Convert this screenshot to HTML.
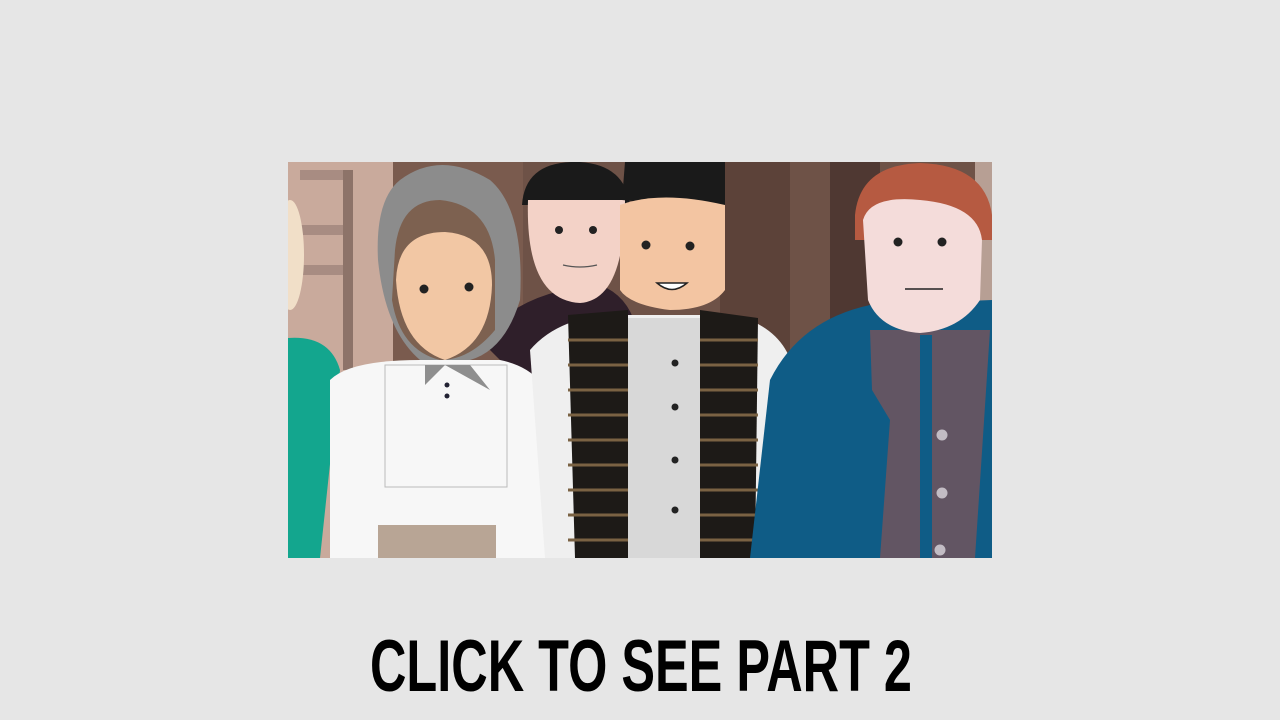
<!DOCTYPE html>
<html><head><meta charset="utf-8"><style>
html,body{margin:0;padding:0;background:#e6e6e6;width:1280px;height:720px;overflow:hidden}
</style></head><body>
<svg width="1280" height="720" viewBox="0 0 1280 720" xmlns="http://www.w3.org/2000/svg">
<rect width="1280" height="720" fill="#e6e6e6"/>
<clipPath id="c"><rect x="288" y="162" width="704" height="396"/></clipPath>
<g clip-path="url(#c)">
<rect x="288" y="162" width="704" height="396" fill="#6e5247"/>
<rect x="288" y="162" width="105" height="396" fill="#c9aa9c"/>
<rect x="300" y="170" width="50" height="10" fill="#a88c82"/>
<rect x="300" y="225" width="50" height="10" fill="#a88c82"/>
<rect x="300" y="265" width="50" height="10" fill="#a88c82"/>
<rect x="343" y="170" width="10" height="200" fill="#8d7369"/>
<rect x="393" y="162" width="130" height="396" fill="#7a5b4e"/>
<rect x="720" y="162" width="70" height="396" fill="#5c4239"/>
<rect x="830" y="162" width="50" height="396" fill="#4f3832"/>
<rect x="975" y="162" width="17" height="150" fill="#b79f94"/>
<ellipse cx="290" cy="255" rx="14" ry="55" fill="#f1dfc8"/>
<path d="M288 338 Q330 335 340 370 L320 558 L288 558Z" fill="#13a68e"/>
<path d="M480 340 Q520 290 600 285 Q640 300 640 360 L540 400Z" fill="#2f1f2a"/>
<path d="M522 205 Q525 160 580 162 Q625 165 630 205 Z" fill="#1a1a1a"/>
<path d="M528 200 Q525 300 580 303 Q625 300 625 200 Z" fill="#f3d2c7"/>
<circle cx="559" cy="230" r="4" fill="#222"/><circle cx="593" cy="230" r="4" fill="#222"/>
<path d="M563 265 Q580 269 597 265" stroke="#555" stroke-width="1.2" fill="none"/>
<path d="M400 180 Q440 150 490 180 Q525 210 520 300 Q505 350 470 360 L420 360 Q385 330 378 260 Q375 200 400 180Z" fill="#8c8c8c"/>
<path d="M395 250 Q400 200 440 200 Q490 205 495 260 L495 330 Q470 360 440 360 Q400 350 392 300Z" fill="#7d6150"/>
<path d="M396 280 Q398 232 445 232 Q492 235 492 285 Q490 345 445 360 Q400 345 396 280Z" fill="#f2c7a4"/>
<circle cx="424" cy="289" r="4.5" fill="#222"/><circle cx="469" cy="287" r="4.5" fill="#222"/>
<path d="M330 380 Q350 360 420 360 L500 360 Q550 370 555 420 L558 558 L330 558Z" fill="#f7f7f7"/>
<rect x="385" y="365" width="122" height="122" fill="none" stroke="#bbb" stroke-width="1"/>
<rect x="378" y="525" width="118" height="33" fill="#b8a595"/>
<path d="M425 385 L445 365 L490 390 L470 365 L425 365Z" fill="#8e8e8e"/>
<circle cx="447" cy="385" r="2.5" fill="#223"/><circle cx="447" cy="396" r="2.5" fill="#223"/>
<path d="M530 350 Q560 315 620 315 L735 315 Q790 330 795 380 L790 558 L545 558Z" fill="#efefef"/>
<rect x="625" y="318" width="105" height="240" fill="#d8d8d8"/>
<path d="M568 315 L628 310 L628 558 L575 558Z" fill="#1d1a17"/>
<path d="M700 310 L758 318 L755 558 L700 558Z" fill="#1d1a17"/>
<g stroke="#7a6243" stroke-width="3">
<line x1="568" y1="340" x2="628" y2="340"/><line x1="700" y1="340" x2="758" y2="340"/>
<line x1="568" y1="365" x2="628" y2="365"/><line x1="700" y1="365" x2="758" y2="365"/>
<line x1="568" y1="390" x2="628" y2="390"/><line x1="700" y1="390" x2="758" y2="390"/>
<line x1="568" y1="415" x2="628" y2="415"/><line x1="700" y1="415" x2="758" y2="415"/>
<line x1="568" y1="440" x2="628" y2="440"/><line x1="700" y1="440" x2="758" y2="440"/>
<line x1="568" y1="465" x2="628" y2="465"/><line x1="700" y1="465" x2="758" y2="465"/>
<line x1="568" y1="490" x2="628" y2="490"/><line x1="700" y1="490" x2="758" y2="490"/>
<line x1="568" y1="515" x2="628" y2="515"/><line x1="700" y1="515" x2="758" y2="515"/>
<line x1="568" y1="540" x2="628" y2="540"/><line x1="700" y1="540" x2="758" y2="540"/>
</g>
<g fill="#222"><circle cx="675" cy="363" r="3.5"/><circle cx="675" cy="407" r="3.5"/><circle cx="675" cy="460" r="3.5"/><circle cx="675" cy="510" r="3.5"/></g>
<path d="M622 200 L625 162 L725 162 L725 210Z" fill="#1a1a1a"/>
<path d="M620 205 Q660 190 725 205 L725 290 Q710 310 670 310 Q630 305 620 290Z" fill="#f3c5a2"/>
<circle cx="646" cy="245" r="4.5" fill="#222"/><circle cx="690" cy="246" r="4.5" fill="#222"/>
<path d="M657 283 Q672 296 687 283 Z" fill="#fff" stroke="#222" stroke-width="1.5"/>
<path d="M770 380 Q800 320 870 305 L992 300 L992 558 L750 558Z" fill="#0f5c86"/>
<path d="M870 330 L990 330 L975 558 L880 558 L890 420 L872 390Z" fill="#625563"/>
<rect x="920" y="335" width="12" height="223" fill="#0f5c86"/>
<g fill="#c2bcc4"><circle cx="942" cy="435" r="5.5"/><circle cx="942" cy="493" r="5.5"/><circle cx="940" cy="550" r="5.5"/></g>
<path d="M855 215 Q860 165 920 163 Q985 165 992 215 L992 240 L855 240Z" fill="#b65a41"/>
<path d="M863 220 Q870 195 920 200 Q978 205 982 240 L980 300 Q960 330 920 333 Q880 330 868 300Z" fill="#f4dcda"/>
<circle cx="898" cy="242" r="4.5" fill="#222"/><circle cx="942" cy="242" r="4.5" fill="#222"/>
<line x1="905" y1="289" x2="943" y2="289" stroke="#222" stroke-width="1.5"/>
</g>
<text x="370" y="691" textLength="542" lengthAdjust="spacingAndGlyphs" font-family="'Liberation Sans Narrow','Liberation Sans',sans-serif" font-weight="bold" font-size="73" fill="#000">CLICK TO SEE PART 2</text>
</svg>
</body></html>
